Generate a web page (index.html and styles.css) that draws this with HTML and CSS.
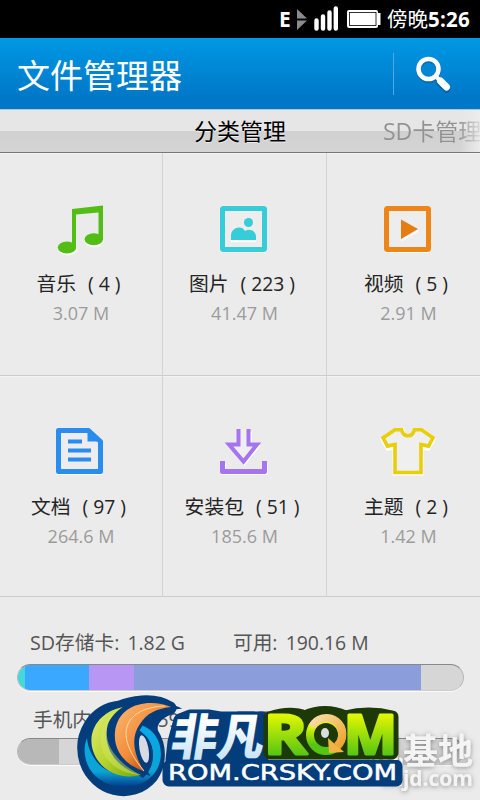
FILE: index.html
```html
<!DOCTYPE html>
<html lang="zh-CN">
<head>
<meta charset="utf-8">
<title>文件管理器</title>
<link rel="stylesheet" href="styles.css">
</head>
<body>
<div class="status">
  <svg class="signals" width="101" height="38" viewBox="0 0 101 38">
    <path d="M17 9l10 9.500H17zM17 20.500h10L17 30z" fill="#8b8b8b"/>
    <g stroke="#fff" stroke-width="4.400" stroke-linecap="round"><path d="M36.500 20.500v8M43 16.500v12M49.500 12.500v16M55.800 8.500v20"/></g>
    <rect x="67" y="10" width="31" height="18" rx="2" fill="#fff"/><path d="M98 13h2.500v12H98z" fill="#fff"/>
    <rect x="69.500" y="12.500" width="26.500" height="13" fill="#fff" stroke="#000" stroke-width=".8"/>
  </svg>
  <span class="edge">E</span>
  <span class="clock">傍晚<b>5:26</b></span>
</div>
<header class="header">
  <h1>文件管理器</h1>
  <div class="search">
    <svg width="44" height="44" viewBox="0 0 44 44">
      <g fill="none" stroke="#045799" opacity=".6" transform="translate(0 1.500)"><circle cx="18.500" cy="17" r="10" stroke-width="5"/><path d="M25 24l4 4" stroke-width="4"/><path d="M30 29l6.500 6.500" stroke-width="7.500" stroke-linecap="round"/></g>
      <g fill="none" stroke="#fff"><circle cx="18.500" cy="17" r="10" stroke-width="4.600"/><path d="M25 23.500l5 5" stroke-width="4"/><path d="M30.500 29l6 6" stroke-width="7" stroke-linecap="round"/></g>
    </svg>
  </div>
</header>
<nav class="tabs"><span class="tab active">分类管理</span><span class="tab">SD卡管理</span></nav>
<main class="grid">
  <section class="cell">
    <svg width="54" height="54" viewBox="0 0 54 54"><g fill="#fff" transform="translate(1 1)"><ellipse cx="13" cy="43" rx="9.500" ry="6.300"/><ellipse cx="39" cy="35" rx="9.500" ry="6.300"/></g><path d="M18 4l31-3.500V35h-4.500V7.500L22 9.500V43h-4z" fill="#52bd15"/><ellipse cx="13" cy="42.500" rx="9.200" ry="6" fill="#52bd15"/><ellipse cx="39.800" cy="34.300" rx="9.200" ry="6" fill="#52bd15"/></svg>
    <div class="name">音乐<span>( 4 )</span></div><div class="size">3.07 M</div>
  </section>
  <section class="cell">
    <svg width="54" height="54" viewBox="0 0 54 54"><rect x="6" y="4" width="41" height="41.500" rx="1" fill="none" stroke="#fff" stroke-width="5"/><rect x="5.500" y="3.500" width="42" height="41" rx="1" fill="#ededed" stroke="#36ccd8" stroke-width="5"/><path d="M14 35h25v2H14z" fill="#fff"/><path d="M14 35v-4c0-9 11-11 14-5 5-3 11 0 11 6v3z" fill="#36ccd8"/><circle cx="31.500" cy="17.500" r="4.500" fill="#36ccd8"/></svg>
    <div class="name">图片<span>( 223 )</span></div><div class="size">41.47 M</div>
  </section>
  <section class="cell">
    <svg width="54" height="54" viewBox="0 0 54 54"><rect x="6" y="4" width="41" height="41.500" rx="1" fill="none" stroke="#fff" stroke-width="5"/><rect x="5.500" y="3.500" width="42" height="41" rx="1" fill="#ededed" stroke="#ee8518" stroke-width="5"/><path d="M20 34.500l17-9.500v2L21 36z" fill="#fff"/><path d="M20 14.500L37 24 20 34z" fill="#e67d13"/></svg>
    <div class="name">视频<span>( 5 )</span></div><div class="size">2.91 M</div>
  </section>
  <section class="cell">
    <svg class="doc" width="54" height="54" viewBox="0 0 54 54"><path d="M5.500 4h32l10 10v30.500h-42z" fill="none" stroke="#fff" stroke-width="5" stroke-linejoin="round"/><path d="M5.500 2.500h30l12 11v30h-42z" fill="#ededed" stroke="#2a8cef" stroke-width="5" stroke-linejoin="round"/><path d="M34.500 2v11.500H48z" fill="#2a8cef"/><path d="M15 13.500h14M15 22.500h23M15 31.500h23" stroke="#2a8cef" stroke-width="4.200"/></svg>
    <div class="name">文档<span>( 97 )</span></div><div class="size">264.6 M</div>
  </section>
  <section class="cell">
    <svg width="54" height="54" viewBox="0 0 54 54"><path d="M5.500 34.500V43h42v-8.500M21.500 3v15.500H15L26.500 33 38 18.500h-6.500V3" fill="none" stroke="#fff" stroke-width="5" transform="translate(.8 1.200)"/><path d="M5.500 33v10.500h42V33" fill="none" stroke="#a574ef" stroke-width="5" stroke-linejoin="round"/><path d="M21.500 1v15.500h-9.500L26.500 33.500 40 16.500h-8.500V1" fill="#efefef" stroke="#a574ef" stroke-width="4"/></svg>
    <div class="name">安装包<span>( 51 )</span></div><div class="size">185.6 M</div>
  </section>
  <section class="cell">
    <svg width="58" height="54" viewBox="-2 0 58 54"><g fill="none" stroke-linejoin="miter"><path d="M14 2h7c2 8 12 8 14 0h7l10 8-5 9-7-1v26H14V18l-7 1-5-9z" stroke="#fff" stroke-width="5" transform="translate(0 1)"/><path d="M14 1.700h6.500c2 8 11 8 13 0h7l11.500 8.200-4.500 8.200-7.500-1.600v28H14v-28l-7.500 1.600L2 9.900z" fill="#efefef" stroke="#e8ce0b" stroke-width="3.600"/></g></svg>
    <div class="name">主题<span>( 2 )</span></div><div class="size">1.42 M</div>
  </section>
</main>
<footer class="storage">
  <div class="info"><span class="total">SD存储卡: <i>1.82 G</i></span><span>可用: <i>190.16 M</i></span></div>
  <div class="bar sd"><i class="teal"></i><i class="blue"></i><i class="violet"></i><i class="indigo"></i></div>
  <div class="info phone"><span class="total">手机内存: <i>512.59 M</i></span><span>可用: <i>422.1 M</i></span></div>
  <div class="bar"><i class="gray"></i></div>
</footer>
<svg class="marks" width="410" height="110" viewBox="70 690 410 110">
  <defs>
    <linearGradient id="green" x1="0" y1="0" x2="0" y2="1"><stop offset=".2" stop-color="#ecfa00"/><stop offset=".8" stop-color="#55c514"/></linearGradient>
    <linearGradient id="orange" x1="0" y1="0" x2="1" y2="1"><stop offset=".1" stop-color="#fab06a"/><stop offset=".5" stop-color="#f28b38"/><stop offset=".8" stop-color="#bb4b09"/></linearGradient>
    <linearGradient id="lime" x1="0" y1="0" x2="1" y2="1"><stop offset="0" stop-color="#e5ef75"/><stop offset=".5" stop-color="#b8d532"/><stop offset="1" stop-color="#70a70b"/></linearGradient>
    <linearGradient id="aqua" x1="0" y1="0" x2="0" y2="1"><stop offset="0" stop-color="#08a9ea"/><stop offset=".75" stop-color="#0aa5d6"/><stop offset="1" stop-color="#04388a"/></linearGradient>
    <linearGradient id="ice" x1="0" y1="0" x2="0" y2="1"><stop offset=".3" stop-color="#fff"/><stop offset="1" stop-color="#b9def5"/></linearGradient>
    <linearGradient id="gold" x1="0" y1="0" x2="1" y2="1"><stop offset="0" stop-color="#f8dfa7"/><stop offset="1" stop-color="#f0a12b"/></linearGradient>
    <filter id="soft" x="-20%" y="-20%" width="140%" height="150%"><feDropShadow dx="0" dy="1" stdDeviation="2.500" flood-color="#555" flood-opacity=".65"/></filter>
  </defs>
  <g class="site" filter="url(#soft)" text-anchor="end"><text x="473" y="764" font-size="35">机基地</text><text class="domain" x="473" y="786" font-size="21">mjd.com</text></g>
  <g fill="#033d7b" stroke="#033d7b" stroke-width="13" stroke-linejoin="round">
    <path d="M170 708C153 697 129 703 120 707 93 710 78 736 86 762c9 27 45 39 66 14 8-12 9-29 0-43-3-9 2-19 18-25z"/>
    <path d="M180 720l10-4h18l12 2h42v42h-90l2-18zM169 767h227v13H169z"/>
  </g>
  <path d="M141 725c24 8 27 42 5 56-24 15-58 1-61-26-1-7 0-12 2-17 2 22 20 39 42 37 25-2 34-31 8-46z" fill="url(#aqua)"/>
  <path d="M137 730c18 8 22 34 6 48l-14-8c-8-14-8-29 8-40z" fill="#033d7b"/>
  <ellipse cx="144" cy="749" rx="4.500" ry="14" fill="#d9dbe3" transform="rotate(-10 144 749)"/>
  <path d="M123 707c-30 6-40 34-24 55 10 13 27 17 42 13-23-6-38-26-34-47 1-8 8-16 16-21z" fill="url(#lime)"/>
  <path d="M122 707c-22 13-24 46 19 68-25-1-43-18-40-41 1-11 10-22 21-27z" fill="#d9e768" opacity=".45"/>
  <path d="M171 707C150 698 118 703 115 732c-2 20 12 34 29 39-10-16-14-33-4-47 7-11 16-15 31-17z" fill="url(#orange)" stroke="#033d7b" stroke-width="6" paint-order="stroke"/>
  <path d="M165 706c-33 1-57 22-21 65" fill="none" stroke="#ffd9aa"/>
  <g transform="translate(172 755) skewX(-9)"><text class="brand" x="-3" y="0" font-size="49" textLength="93" lengthAdjust="spacingAndGlyphs" fill="url(#ice)">非凡</text></g>
  <g fill="#1e3908" stroke="#1e3908" stroke-width="13" stroke-linejoin="round"><path d="M270 718q20-7 35-1 20-9 40 0 24-6 47 0v36H270z"/></g>
  <g class="rom" fill="url(#green)" stroke="url(#green)" stroke-width="3" stroke-linejoin="round"><text x="264" y="754" font-size="53" textLength="43" lengthAdjust="spacingAndGlyphs">R</text><text x="344" y="754" font-size="53" textLength="53" lengthAdjust="spacingAndGlyphs">M</text></g>
  <circle cx="326" cy="735" r="16" fill="#1e3908" stroke="url(#green)" stroke-width="8"/>
  <path d="M312 727a16 16 0 1 1 25 19" fill="none" stroke="url(#gold)" stroke-width="8"/><path d="M328 738l16 14-15 1z" fill="#f0b344"/><ellipse cx="325" cy="733" rx="4" ry="5" fill="#d9dde0"/>
  <rect x="164" y="760" width="238" height="26" rx="5" fill="#033d7b"/>
  <text class="url" x="168" y="780" font-size="21" textLength="229" lengthAdjust="spacingAndGlyphs">ROM.CRSKY.COM</text>
</svg>
</body>
</html>
```
FILE: styles.css
```css
* { box-sizing: border-box; }
body {
  margin: 0;
  width: 480px;
  height: 800px;
  overflow: hidden;
  position: relative;
  background: #ebebeb;
  font-family: "Open Sans", "Noto Sans CJK SC", sans-serif;
}
i { font-style: normal; }
.status {
  height: 38px;
  background: #000;
  color: #fff;
  display: flex;
  flex-direction: row;
  align-items: center;
  justify-content: flex-end;
  padding-right: 9px;
}
.signals { order: 2; margin-left: -11px; margin-right: 6px; }
.edge { order: 1; font: bold 21px "Noto Sans", sans-serif; width: 12px; }
.clock { order: 3; font-size: 20.500px; line-height: 38px; white-space: nowrap; width: 84px; }
.clock b { letter-spacing: .2px; }
.header {
  height: 71px;
  background: linear-gradient(#0098e5, #0077c7 85%, #0077c7);
  display: flex;
  align-items: center;
  padding-left: 17px;
}
.header h1 {
  flex: 1;
  margin: 0;
  padding-top: 4px;
  color: #fff;
  font-size: 33px;
  line-height: 67px;
  font-weight: 400;
}
.search { width: 87px; height: 42px; border-left: 1px solid #4ca9e0; padding-left: 16px; }
.search svg { display: block; margin-top: -1px; }
.tabs {
  height: 44px;
  display: flex;
  align-items: center;
  padding-left: 194px;
  gap: 97px;
  overflow: hidden;
  border-top: 1px solid #b5c3cc;
  border-bottom: 1px solid #767676;
  background: linear-gradient(90deg, transparent 460px, #ececec 480px), linear-gradient(#e6e6e6 0 21px, #d0d0d0 21px, #d5d5d5);
}
.tab { font-size: 23px; white-space: nowrap; line-height: 42px; color: #929292; text-shadow: 0 1px #eee; }
.tab.active { color: #000; }
.tab:last-child {
  background: linear-gradient(90deg, #929292 75px, #ddd 98px);
  -webkit-background-clip: text;
  background-clip: text;
  color: transparent;
  text-shadow: none;
}
.grid {
  width: 491px;
  display: grid;
  grid-template-columns: 163px 164px 164px;
  grid-template-rows: 223px 221px;
}
.cell {
  border-right: 1px solid #d3d3d3;
  border-bottom: 1px solid #cbcbcb;
  box-shadow: inset 0 1px #f3f3f3;
  display: flex;
  flex-direction: column;
  align-items: center;
  padding: 52px 1px 0 0;
}
.doc { margin-right: 2px; }
.name {
  margin-top: 11px;
  height: 28px;
  line-height: 28px;
  font-size: 19.800px;
  color: #242424;
  white-space: nowrap;
  padding-right: 4px;
}
.name span { font-size: 19.300px; margin-left: 12px; }
.size { margin: 1px 0 0 1px; height: 28px; line-height: 28px; font-size: 18px; color: #9b9b9b; }
.storage { padding: 31px 17px 0; }
.info { height: 30px; line-height: 30px; font-size: 19.700px; color: #555; display: flex; padding-left: 13px; white-space: nowrap; }
.total { width: 203px; }
.info i { margin-left: 3px; font-size: 19.400px; }
.bar {
  width: 447px;
  height: 27px;
  margin-top: 6px;
  border: 1px solid #b7b7b7;
  border-top-color: #888;
  border-bottom-color: #ccc;
  border-radius: 14px;
  overflow: hidden;
  display: flex;
  background: #d6d6d7;
  box-shadow: 0 1px #fafafa;
}
.teal { width: 7px; background: #42d9dc; }
.blue { width: 64px; background: #3ba8ff; }
.violet { width: 45px; background: #b896f4; }
.indigo { width: 287px; background: #8c9ddb; }
.gray { width: 41px; background: #b8b8b8; }
.phone { margin-top: 14px; margin-bottom: -3px; padding-left: 16px; }
.phone i { margin-left: -3px; }
.marks { position: absolute; left: 70px; top: 690px; }
.site { font-family: "Noto Sans CJK SC", sans-serif; font-weight: 700; fill: #f4f4f4; }
.domain { font-family: "Open Sans", sans-serif; }
.brand { font-family: "Noto Sans CJK SC", sans-serif; font-weight: 900; }
.rom { font-family: "Open Sans", sans-serif; font-weight: 700; }
.url { font-family: "DejaVu Sans", sans-serif; fill: #fff; stroke: #fff; stroke-width: .5px; }
```
